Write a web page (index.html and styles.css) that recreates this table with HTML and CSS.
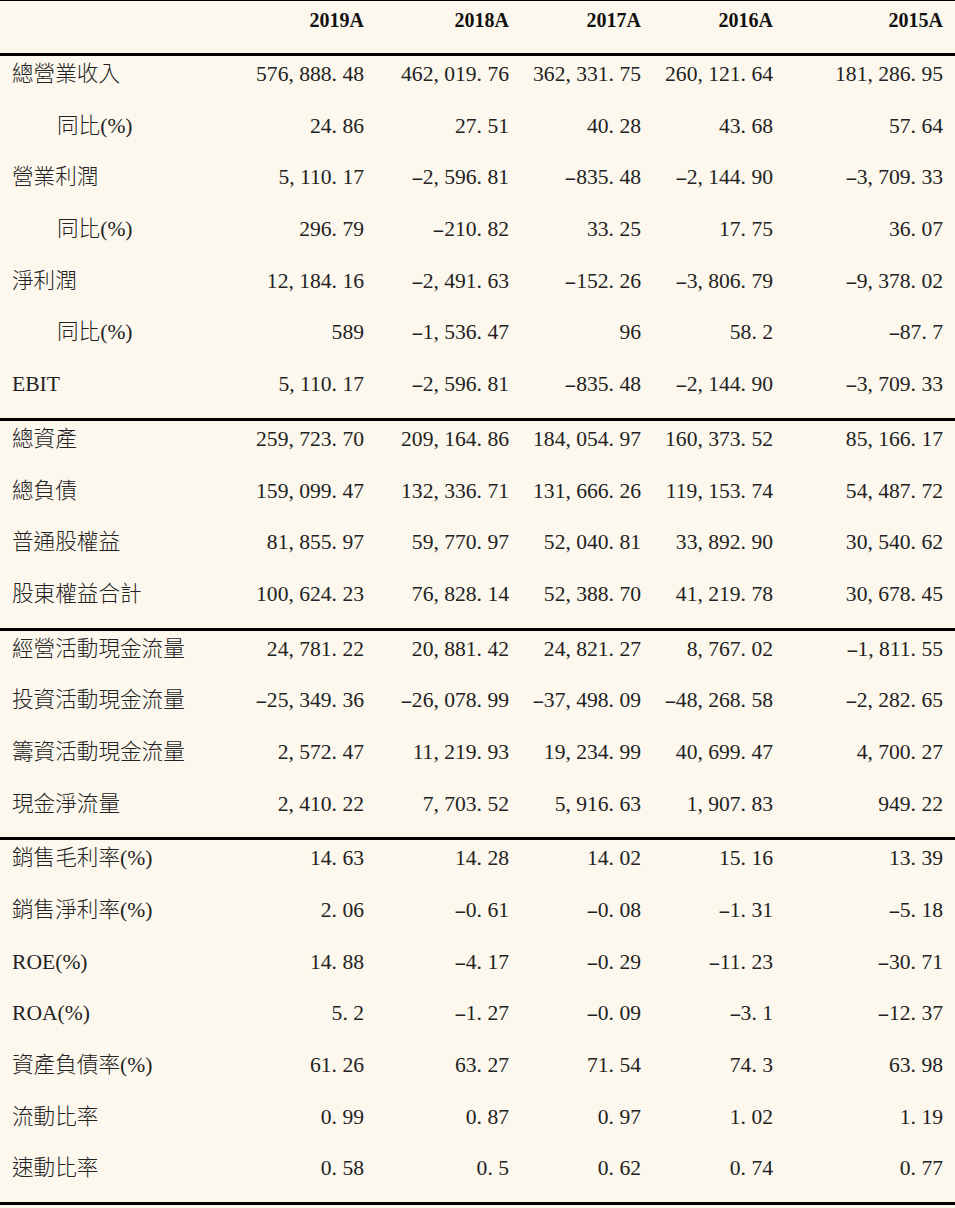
FILE: index.html
```html
<!DOCTYPE html>
<html lang="zh-Hant">
<head>
<meta charset="utf-8">
<title>財務摘要</title>
<link rel="stylesheet" href="styles.css">
</head>
<body>
<div class="sheet">
  <div class="row head">
    <div class="lbl"></div>
    <div class="num">2019A</div>
    <div class="num">2018A</div>
    <div class="num">2017A</div>
    <div class="num">2016A</div>
    <div class="num">2015A</div>
  </div>

  <div class="section">
    <div class="row">
      <div class="lbl">總營業收入</div>
      <div class="num">576<span class="p">,</span>888<span class="p">.</span>48</div>
      <div class="num">462<span class="p">,</span>019<span class="p">.</span>76</div>
      <div class="num">362<span class="p">,</span>331<span class="p">.</span>75</div>
      <div class="num">260<span class="p">,</span>121<span class="p">.</span>64</div>
      <div class="num">181<span class="p">,</span>286<span class="p">.</span>95</div>
    </div>
    <div class="row">
      <div class="lbl sub">同比(%)</div>
      <div class="num">24<span class="p">.</span>86</div>
      <div class="num">27<span class="p">.</span>51</div>
      <div class="num">40<span class="p">.</span>28</div>
      <div class="num">43<span class="p">.</span>68</div>
      <div class="num">57<span class="p">.</span>64</div>
    </div>
    <div class="row">
      <div class="lbl">營業利潤</div>
      <div class="num">5<span class="p">,</span>110<span class="p">.</span>17</div>
      <div class="num"><span class="m">-</span>2<span class="p">,</span>596<span class="p">.</span>81</div>
      <div class="num"><span class="m">-</span>835<span class="p">.</span>48</div>
      <div class="num"><span class="m">-</span>2<span class="p">,</span>144<span class="p">.</span>90</div>
      <div class="num"><span class="m">-</span>3<span class="p">,</span>709<span class="p">.</span>33</div>
    </div>
    <div class="row">
      <div class="lbl sub">同比(%)</div>
      <div class="num">296<span class="p">.</span>79</div>
      <div class="num"><span class="m">-</span>210<span class="p">.</span>82</div>
      <div class="num">33<span class="p">.</span>25</div>
      <div class="num">17<span class="p">.</span>75</div>
      <div class="num">36<span class="p">.</span>07</div>
    </div>
    <div class="row">
      <div class="lbl">淨利潤</div>
      <div class="num">12<span class="p">,</span>184<span class="p">.</span>16</div>
      <div class="num"><span class="m">-</span>2<span class="p">,</span>491<span class="p">.</span>63</div>
      <div class="num"><span class="m">-</span>152<span class="p">.</span>26</div>
      <div class="num"><span class="m">-</span>3<span class="p">,</span>806<span class="p">.</span>79</div>
      <div class="num"><span class="m">-</span>9<span class="p">,</span>378<span class="p">.</span>02</div>
    </div>
    <div class="row">
      <div class="lbl sub">同比(%)</div>
      <div class="num">589</div>
      <div class="num"><span class="m">-</span>1<span class="p">,</span>536<span class="p">.</span>47</div>
      <div class="num">96</div>
      <div class="num">58<span class="p">.</span>2</div>
      <div class="num"><span class="m">-</span>87<span class="p">.</span>7</div>
    </div>
    <div class="row">
      <div class="lbl">EBIT</div>
      <div class="num">5<span class="p">,</span>110<span class="p">.</span>17</div>
      <div class="num"><span class="m">-</span>2<span class="p">,</span>596<span class="p">.</span>81</div>
      <div class="num"><span class="m">-</span>835<span class="p">.</span>48</div>
      <div class="num"><span class="m">-</span>2<span class="p">,</span>144<span class="p">.</span>90</div>
      <div class="num"><span class="m">-</span>3<span class="p">,</span>709<span class="p">.</span>33</div>
    </div>
  </div>

  <div class="section">
    <div class="row">
      <div class="lbl">總資產</div>
      <div class="num">259<span class="p">,</span>723<span class="p">.</span>70</div>
      <div class="num">209<span class="p">,</span>164<span class="p">.</span>86</div>
      <div class="num">184<span class="p">,</span>054<span class="p">.</span>97</div>
      <div class="num">160<span class="p">,</span>373<span class="p">.</span>52</div>
      <div class="num">85<span class="p">,</span>166<span class="p">.</span>17</div>
    </div>
    <div class="row">
      <div class="lbl">總負債</div>
      <div class="num">159<span class="p">,</span>099<span class="p">.</span>47</div>
      <div class="num">132<span class="p">,</span>336<span class="p">.</span>71</div>
      <div class="num">131<span class="p">,</span>666<span class="p">.</span>26</div>
      <div class="num">119<span class="p">,</span>153<span class="p">.</span>74</div>
      <div class="num">54<span class="p">,</span>487<span class="p">.</span>72</div>
    </div>
    <div class="row">
      <div class="lbl">普通股權益</div>
      <div class="num">81<span class="p">,</span>855<span class="p">.</span>97</div>
      <div class="num">59<span class="p">,</span>770<span class="p">.</span>97</div>
      <div class="num">52<span class="p">,</span>040<span class="p">.</span>81</div>
      <div class="num">33<span class="p">,</span>892<span class="p">.</span>90</div>
      <div class="num">30<span class="p">,</span>540<span class="p">.</span>62</div>
    </div>
    <div class="row">
      <div class="lbl">股東權益合計</div>
      <div class="num">100<span class="p">,</span>624<span class="p">.</span>23</div>
      <div class="num">76<span class="p">,</span>828<span class="p">.</span>14</div>
      <div class="num">52<span class="p">,</span>388<span class="p">.</span>70</div>
      <div class="num">41<span class="p">,</span>219<span class="p">.</span>78</div>
      <div class="num">30<span class="p">,</span>678<span class="p">.</span>45</div>
    </div>
  </div>

  <div class="section">
    <div class="row">
      <div class="lbl">經營活動現金流量</div>
      <div class="num">24<span class="p">,</span>781<span class="p">.</span>22</div>
      <div class="num">20<span class="p">,</span>881<span class="p">.</span>42</div>
      <div class="num">24<span class="p">,</span>821<span class="p">.</span>27</div>
      <div class="num">8<span class="p">,</span>767<span class="p">.</span>02</div>
      <div class="num"><span class="m">-</span>1<span class="p">,</span>811<span class="p">.</span>55</div>
    </div>
    <div class="row">
      <div class="lbl">投資活動現金流量</div>
      <div class="num"><span class="m">-</span>25<span class="p">,</span>349<span class="p">.</span>36</div>
      <div class="num"><span class="m">-</span>26<span class="p">,</span>078<span class="p">.</span>99</div>
      <div class="num"><span class="m">-</span>37<span class="p">,</span>498<span class="p">.</span>09</div>
      <div class="num"><span class="m">-</span>48<span class="p">,</span>268<span class="p">.</span>58</div>
      <div class="num"><span class="m">-</span>2<span class="p">,</span>282<span class="p">.</span>65</div>
    </div>
    <div class="row">
      <div class="lbl">籌資活動現金流量</div>
      <div class="num">2<span class="p">,</span>572<span class="p">.</span>47</div>
      <div class="num">11<span class="p">,</span>219<span class="p">.</span>93</div>
      <div class="num">19<span class="p">,</span>234<span class="p">.</span>99</div>
      <div class="num">40<span class="p">,</span>699<span class="p">.</span>47</div>
      <div class="num">4<span class="p">,</span>700<span class="p">.</span>27</div>
    </div>
    <div class="row">
      <div class="lbl">現金淨流量</div>
      <div class="num">2<span class="p">,</span>410<span class="p">.</span>22</div>
      <div class="num">7<span class="p">,</span>703<span class="p">.</span>52</div>
      <div class="num">5<span class="p">,</span>916<span class="p">.</span>63</div>
      <div class="num">1<span class="p">,</span>907<span class="p">.</span>83</div>
      <div class="num">949<span class="p">.</span>22</div>
    </div>
  </div>

  <div class="section last">
    <div class="row">
      <div class="lbl">銷售毛利率(%)</div>
      <div class="num">14<span class="p">.</span>63</div>
      <div class="num">14<span class="p">.</span>28</div>
      <div class="num">14<span class="p">.</span>02</div>
      <div class="num">15<span class="p">.</span>16</div>
      <div class="num">13<span class="p">.</span>39</div>
    </div>
    <div class="row">
      <div class="lbl">銷售淨利率(%)</div>
      <div class="num">2<span class="p">.</span>06</div>
      <div class="num"><span class="m">-</span>0<span class="p">.</span>61</div>
      <div class="num"><span class="m">-</span>0<span class="p">.</span>08</div>
      <div class="num"><span class="m">-</span>1<span class="p">.</span>31</div>
      <div class="num"><span class="m">-</span>5<span class="p">.</span>18</div>
    </div>
    <div class="row">
      <div class="lbl">ROE(%)</div>
      <div class="num">14<span class="p">.</span>88</div>
      <div class="num"><span class="m">-</span>4<span class="p">.</span>17</div>
      <div class="num"><span class="m">-</span>0<span class="p">.</span>29</div>
      <div class="num"><span class="m">-</span>11<span class="p">.</span>23</div>
      <div class="num"><span class="m">-</span>30<span class="p">.</span>71</div>
    </div>
    <div class="row">
      <div class="lbl">ROA(%)</div>
      <div class="num">5<span class="p">.</span>2</div>
      <div class="num"><span class="m">-</span>1<span class="p">.</span>27</div>
      <div class="num"><span class="m">-</span>0<span class="p">.</span>09</div>
      <div class="num"><span class="m">-</span>3<span class="p">.</span>1</div>
      <div class="num"><span class="m">-</span>12<span class="p">.</span>37</div>
    </div>
    <div class="row">
      <div class="lbl">資產負債率(%)</div>
      <div class="num">61<span class="p">.</span>26</div>
      <div class="num">63<span class="p">.</span>27</div>
      <div class="num">71<span class="p">.</span>54</div>
      <div class="num">74<span class="p">.</span>3</div>
      <div class="num">63<span class="p">.</span>98</div>
    </div>
    <div class="row">
      <div class="lbl">流動比率</div>
      <div class="num">0<span class="p">.</span>99</div>
      <div class="num">0<span class="p">.</span>87</div>
      <div class="num">0<span class="p">.</span>97</div>
      <div class="num">1<span class="p">.</span>02</div>
      <div class="num">1<span class="p">.</span>19</div>
    </div>
    <div class="row">
      <div class="lbl">速動比率</div>
      <div class="num">0<span class="p">.</span>58</div>
      <div class="num">0<span class="p">.</span>5</div>
      <div class="num">0<span class="p">.</span>62</div>
      <div class="num">0<span class="p">.</span>74</div>
      <div class="num">0<span class="p">.</span>77</div>
    </div>
  </div>
</div>
</body>
</html>
```

FILE: styles.css
```css
html, body {
  margin: 0;
  padding: 0;
  background: #fdf8ee;
}

body {
  color: #222;
  font-family: "Liberation Serif", "Noto Sans CJK TC", serif;
  font-size: 21.6px;
}

.sheet {
  width: 955px;
  border-top: 1px solid #000;
}

.row {
  display: grid;
  grid-template-columns: 218px 158px 145px 132px 132px 170px;
  height: 51.7px;
  box-sizing: border-box;
  padding-top: 6px;
  line-height: 24px;
}

.row.head {
  height: 52px;
  padding-top: 7px;
  font-size: 20px;
  font-weight: bold;
  color: #111;
}

.section {
  border-top: 3px solid #000;
}

.section.last {
  border-bottom: 3px solid #000;
}

.lbl {
  padding-left: 12px;
  white-space: nowrap;
  font-weight: 300;
}

.lbl.sub {
  padding-left: 57px;
}

.num {
  text-align: right;
  padding-right: 12px;
  white-space: nowrap;
}

.p {
  display: inline-block;
  width: 0.5em;
  text-align: left;
}

.m {
  display: inline-block;
  width: 0.5em;
  text-align: center;
  transform: scaleX(1.7);
}
```
